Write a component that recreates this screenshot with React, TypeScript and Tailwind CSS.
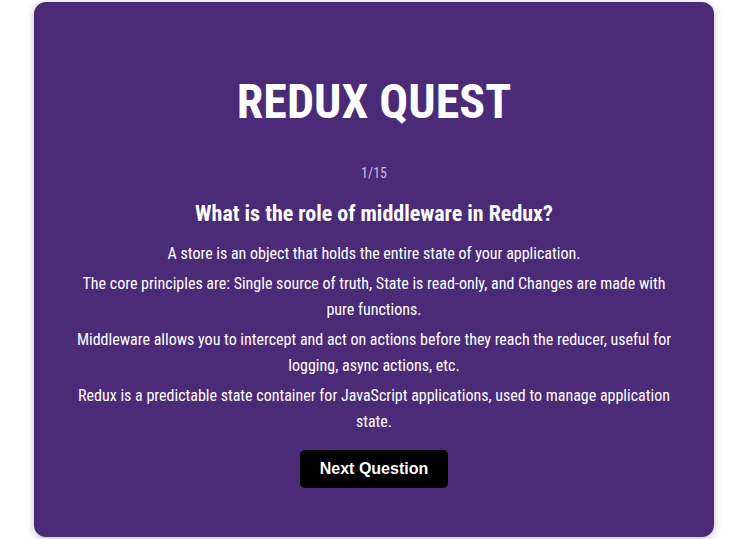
import React from "react";

const answers = [
  "A store is an object that holds the entire state of your application.",
  "The core principles are: Single source of truth, State is read-only, and Changes are made with pure functions.",
  "Middleware allows you to intercept and act on actions before they reach the reducer, useful for logging, async actions, etc.",
  "Redux is a predictable state container for JavaScript applications, used to manage application state.",
];

export default function App() {
  return (
    <div className="w-full min-h-[539px] bg-white flex justify-center pt-[2px] pl-[10px]">
      <div
        className="w-[680px] h-[535px] bg-[#4b2a78] rounded-[12px] shadow-[0_2px_8px_rgba(0,0,0,0.25)] flex flex-col items-center px-[40px] text-white [font-family:'Roboto_Condensed',Roboto,sans-serif] [font-stretch:75%]"
      >
        <h1 className="mt-[72px] text-[48px] leading-[56px] font-bold">REDUX QUEST</h1>
        <div className="mt-[33px] text-[14px] leading-[20px] text-[#c9bddb]">1/15</div>
        <h2 className="mt-[17px] text-[22px] leading-[28px] font-bold">What is the role of middleware in Redux?</h2>
        <div className="mt-[13px] flex flex-col gap-[4px] text-center text-[16px] leading-[26px]">
          {answers.map((a) => (
            <p key={a}>{a}</p>
          ))}
        </div>
        <button className="mt-[15px] h-[38px] px-[20px] rounded-[5px] bg-black text-white text-[16px] font-bold [font-family:'Liberation_Sans',Arial,sans-serif] [font-stretch:100%]">
          Next Question
        </button>
      </div>
    </div>
  );
}
